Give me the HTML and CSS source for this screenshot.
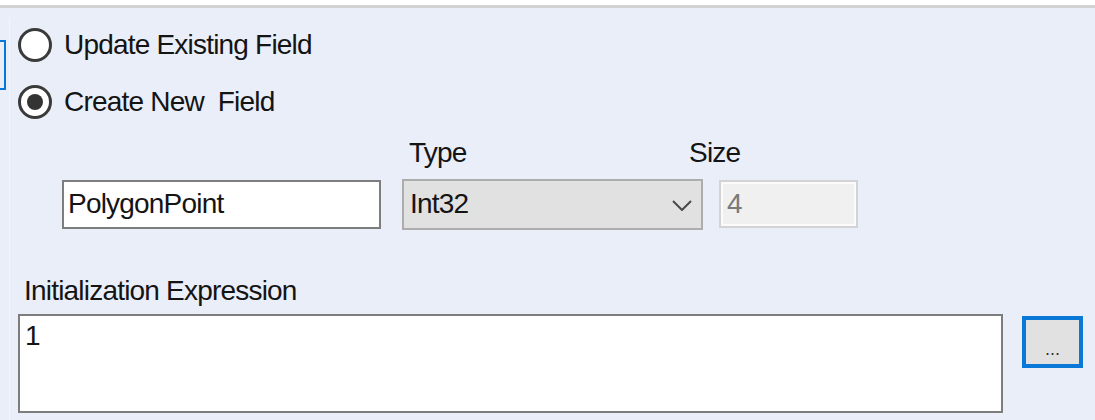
FILE: index.html
```html
<!DOCTYPE html>
<html lang="en">
<head>
    <meta charset="UTF-8">
    <meta name="viewport" content="width=device-width, initial-scale=1.0">
    <title>Field Options</title>
    <link rel="stylesheet" href="styles.css">
</head>
<body>
    <div class="topbar"></div>
    <div class="panel">
        <div class="edge">
            <div class="focus-box"></div>
        </div>
        <div class="content">
            <div class="radio-row">
                <span class="radio"></span>
                <span class="radio-text">Update Existing Field</span>
            </div>
            <div class="radio-row second">
                <span class="radio checked"></span>
                <span class="radio-text">Create New&nbsp; Field</span>
            </div>

            <div class="field-labels">
                <span class="lbl lbl-type">Type</span>
                <span class="lbl lbl-size">Size</span>
            </div>
            <div class="fields">
                <div class="textbox">PolygonPoint</div>
                <div class="combo">
                    <span>Int32</span>
                    <svg width="20" height="11" viewBox="0 0 20 11">
                        <polyline points="1,1 10,10 19,1" fill="none" stroke="#4a4a4a" stroke-width="2"/>
                    </svg>
                </div>
                <div class="sizebox">4</div>
            </div>

            <div class="lbl expr-label">Initialization Expression</div>
            <div class="expr-row">
                <div class="expr-box">1</div>
                <div class="dots-btn">...</div>
            </div>
        </div>
    </div>
</body>
</html>
```

FILE: styles.css
```css
body {
    margin: 0;
    font-family: "Liberation Sans", Arial, sans-serif;
    font-size: 28px;
    letter-spacing: -0.8px;
    color: #141414;
    background-color: #eaeef9;
    overflow: hidden;
}
.topbar {
    height: 5px;
    background-color: #fff;
    border-bottom: 3px solid #d2d2d2;
}
.panel {
    display: flex;
    height: 412px;
    background-color: #eaeef9;
}
.edge {
    width: 9px;
}
.focus-box {
    width: 6px;
    height: 50px;
    margin-top: 32px;
    box-sizing: border-box;
    border: 2px solid #0a78d7;
    border-left: none;
}
.content {
    flex: 1;
    margin-top: 10px;
    padding: 10px 0 0 8px;
    border-left: 1px solid #f3f5fc;
}
.radio-row {
    display: flex;
    align-items: center;
    gap: 12px;
    height: 34px;
}
.radio-row.second {
    margin-top: 23px;
}
.radio-text {
    line-height: 32px;
    white-space: pre;
}
.radio {
    width: 34px;
    height: 34px;
    box-sizing: border-box;
    border: 3px solid #3a3a3a;
    border-radius: 50%;
    background-color: #fff;
    display: flex;
    align-items: center;
    justify-content: center;
}
.radio.checked::after {
    content: "";
    width: 16px;
    height: 16px;
    border-radius: 50%;
    background-color: #333;
}
.lbl {
    line-height: 32px;
}
.field-labels {
    display: flex;
    margin-top: 18px;
    margin-left: 44px;
}
.lbl-type {
    width: 317px;
    margin-left: 340px;
    padding-left: 7px;
    box-sizing: border-box;
}
.lbl-size {
    margin-left: -30px;
}
.fields {
    display: flex;
    align-items: center;
    margin-top: 10px;
    margin-left: 44px;
    height: 50px;
}
.textbox, .combo, .sizebox {
    display: flex;
    align-items: center;
    box-sizing: border-box;
    height: 50px;
}
.textbox {
    width: 319px;
    height: 49px;
    padding-left: 4px;
    background-color: #fff;
    border: 2px solid #7d7d7d;
}
.combo {
    width: 301px;
    height: 51px;
    margin-left: 21px;
    padding: 0 9px 0 6px;
    justify-content: space-between;
    background-color: #e1e1e1;
    border: 2px solid #adadad;
}
.combo svg {
    margin-top: 2px;
}
.sizebox {
    width: 139px;
    height: 48px;
    margin-left: 16px;
    padding-left: 6px;
    color: #7a7a7a;
    background-color: #f0f0f0;
    border: 2px solid #d3d3d3;
    box-shadow: inset 0 0 0 2px #fbfbfb;
}
.expr-label {
    margin-top: 46px;
    margin-left: 6px;
}
.expr-row {
    display: flex;
    align-items: flex-start;
    margin-top: 7px;
}
.expr-box {
    width: 985px;
    height: 99px;
    box-sizing: border-box;
    padding: 4px 0 0 5px;
    line-height: 32px;
    background-color: #fff;
    border: 2px solid #7d7d7d;
}
.dots-btn {
    width: 61px;
    height: 52px;
    margin: 2px 0 0 19px;
    box-sizing: border-box;
    display: flex;
    align-items: flex-end;
    justify-content: center;
    padding-bottom: 6px;
    font-size: 18px;
    letter-spacing: 0;
    line-height: 1;
    color: #333;
    background-color: #e1e1e1;
    border: 4px solid #0a78d7;
}
```
